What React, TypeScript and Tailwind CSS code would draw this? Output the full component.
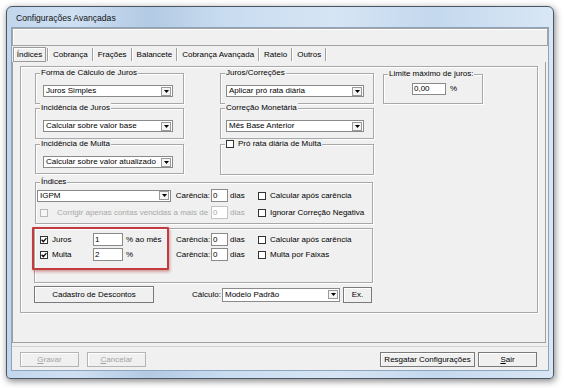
import React from "react";

function Check({ checked = false, disabled = false }: { checked?: boolean; disabled?: boolean }) {
  return (
    <span
      className={`flex-none w-[8px] h-[8px] border flex items-center justify-center ${
        disabled ? "border-[#b8b8b8] bg-[#f6f6f6]" : "border-[#333333] bg-white"
      }`}
    >
      {checked && (
        <svg width="6" height="6" viewBox="0 0 6 6">
          <path d="M0.6 2.8 L2.3 4.6 L5.4 1.1" fill="none" stroke="#111" strokeWidth="1.4" />
        </svg>
      )}
    </span>
  );
}

function Select({ className, text }: { className: string; text: string }) {
  return (
    <div className={`flex-none flex items-center bg-white border border-[#8a8a8a] ${className}`}>
      <span className="flex-1 pl-[2px] whitespace-nowrap overflow-hidden">{text}</span>
      <span className="flex-none mr-[1px] w-[10px] h-[9px] border border-[#9a9a9a] bg-[#f4f4f4] flex items-center justify-center">
        <svg width="5" height="3" viewBox="0 0 5 3">
          <path d="M0 0 H5 L2.5 3 Z" fill="#000" />
        </svg>
      </span>
    </div>
  );
}

function Input({ className, value, disabled = false }: { className: string; value: string; disabled?: boolean }) {
  return (
    <div
      className={`flex-none flex items-center bg-white border pl-[1px] ${
        disabled ? "border-[#c4c4c4] text-[#a8a8a8]" : "border-[#8a8a8a]"
      } ${className}`}
    >
      {value}
    </div>
  );
}

function Btn({ className, children, disabled = false }: { className: string; children: React.ReactNode; disabled?: boolean }) {
  return (
    <div
      className={`flex-none flex items-center justify-center border bg-[#f0f0f0] shadow-[inset_1px_1px_0_#fff] whitespace-nowrap ${
        disabled ? "border-[#b4b4b4] text-[#a4a4a4]" : "border-[#7a7a7a]"
      } ${className}`}
    >
      {children}
    </div>
  );
}

function Group({ className, label, children }: { className: string; label?: React.ReactNode; children?: React.ReactNode }) {
  return (
    <div className={`relative flex-none border border-[#a8a8a8] shadow-[inset_1px_1px_0_#fff,1px_1px_0_#fff] ${className}`}>
      {label && (
        <span className="absolute left-[4px] top-[-6px] bg-[#f0f0f0] px-[1px] leading-[10px] whitespace-nowrap flex items-center">
          {label}
        </span>
      )}
      {children}
    </div>
  );
}

function Sep() {
  return <span className="flex-none self-center w-[2px] h-[13px] border-l border-r border-l-[#a0a0a0] border-r-white" />;
}

function Tab({ label }: { label: string }) {
  return <span className="flex-none px-[4px] self-center whitespace-nowrap">{label}</span>;
}

export default function App() {
  return (
    <div className="w-[564px] h-[388px] bg-white pl-[6px] pt-[6px] overflow-hidden font-['Liberation_Sans',Arial,sans-serif] text-[8px] leading-[10px] text-black">
      {/* window frame */}
      <div className="w-[548px] h-[373px] border border-[#4a5666] rounded-t-[6px] rounded-b-[4px] bg-[linear-gradient(90deg,#c2d6ec_0%,#cfe0f2_12%,#b3cae4_26%,#c9dcf0_40%,#d6e5f4_60%,#c4d8ee_78%,#d9e7f5_100%)] shadow-[1px_2px_7px_rgba(0,0,0,0.5)] flex flex-col px-[5px] pb-[8px]">
        <div className="h-[21px] flex items-center pl-[4px] text-[8.6px] text-[#111]">Configurações Avançadas</div>

        {/* client area */}
        <div className="w-[536px] h-[342px] bg-[#f0f0f0] outline outline-1 outline-[#8ea4bd] flex flex-col">
          {/* top empty panel */}
          <div className="flex-none h-[18px] border border-[#a4a4a4] shadow-[inset_1px_1px_0_#fff]" />

          {/* tabs */}
          <div className="flex-none h-[16px] pt-[1px] pl-[1px] flex">
            <span className="flex-none w-[33px] h-[15px] border border-[#9a9a9a] shadow-[inset_1px_1px_0_#fff] flex items-center justify-center">
              Índices
            </span>
            <span className="w-[1px]" />
            <Sep />
            <Tab label="Cobrança" />
            <Sep />
            <Tab label="Frações" />
            <Sep />
            <Tab label="Balancete" />
            <Sep />
            <Tab label="Cobrança Avançada" />
            <Sep />
            <Tab label="Rateio" />
            <Sep />
            <Tab label="Outros" />
            <Sep />
          </div>

          {/* tab page */}
          <div className="flex-none w-[534px] h-[281px] border-l border-r border-b border-[#a0a0a0] pl-[7px] pt-[4px]">
            <div className="relative w-[518px] h-[247px] border border-[#a8a8a8] shadow-[inset_1px_1px_0_#fff,1px_1px_0_#fff] pt-[6px]">
              {/* columns */}
              <div className="flex h-[102px] pl-[14px]">
                <div className="w-[149px] flex flex-col">
                  <Group className="h-[31px] pt-[11px] pl-[7px]" label="Forma de Cálculo de Juros">
                    <Select className="w-[130px] h-[12px]" text="Juros Simples" />
                  </Group>
                  <Group className="mt-[4px] h-[31px] pt-[11px] pl-[7px]" label="Incidência de Juros">
                    <Select className="w-[130px] h-[12px]" text="Calcular sobre valor base" />
                  </Group>
                  <Group className="mt-[5px] h-[30px] pt-[11px] pl-[7px]" label="Incidência de Multa">
                    <Select className="w-[130px] h-[12px]" text="Calcular sobre valor atualizado" />
                  </Group>
                </div>
                <div className="ml-[36px] w-[154px] flex flex-col">
                  <Group className="h-[31px] pt-[11px] pl-[5px]" label="Juros/Correções">
                    <Select className="w-[138px] h-[12px]" text="Aplicar pró rata diária" />
                  </Group>
                  <Group className="mt-[4px] h-[31px] pt-[11px] pl-[5px]" label="Correção Monetária">
                    <Select className="w-[138px] h-[12px]" text="Mês Base Anterior" />
                  </Group>
                  <Group
                    className="mt-[5px] h-[31px]"
                    label={
                      <>
                        <Check />
                        <span className="ml-[4px]">Pró rata diária de Multa</span>
                      </>
                    }
                  />
                </div>
                <div className="ml-[9px] w-[100px] flex flex-col pt-[1px]">
                  <Group className="h-[30px] pt-[8px] pl-[28px] flex items-start" label="Limite máximo de juros:">
                    <Input className="w-[34px] h-[12px]" value="0,00" />
                    <span className="ml-[4px] mt-[1px]">%</span>
                  </Group>
                </div>
              </div>

              {/* Índices group */}
              <Group className="mt-[7px] ml-[14px] w-[338px] h-[42px] pt-[6px]" label="Índices">
                <div className="flex items-center h-[13px]">
                  <Select className="ml-[1px] w-[134px] h-[12px]" text="IGPM" />
                  <span className="flex-none w-[39px] text-right">Carência:</span>
                  <Input className="ml-[1px] w-[17px] h-[13px]" value="0" />
                  <span className="flex-none w-[30px] pl-[2px]">dias</span>
                  <Check />
                  <span className="ml-[4px] whitespace-nowrap">Calcular após carência</span>
                </div>
                <div className="flex items-center h-[13px] mt-[4px]">
                  <span className="ml-[4px]">
                    <Check disabled />
                  </span>
                  <span className="flex-none ml-[9px] w-[154px] whitespace-nowrap text-[#a8a8a8]">
                    Corrigir apenas contas vencidas a mais de
                  </span>
                  <Input className="w-[17px] h-[13px]" value="0" disabled />
                  <span className="flex-none w-[30px] pl-[2px] text-[#a8a8a8]">dias</span>
                  <Check />
                  <span className="ml-[4px] whitespace-nowrap">Ignorar Correção Negativa</span>
                </div>
              </Group>

              {/* Juros / Multa group */}
              <Group className="mt-[4px] ml-[13px] w-[339px] h-[55px] pt-[4px]">
                <div className="flex items-center h-[13px]">
                  <span className="ml-[5px]">
                    <Check checked />
                  </span>
                  <span className="flex-none ml-[4px] w-[41px]">Juros</span>
                  <Input className="w-[30px] h-[13px]" value="1" />
                  <span className="flex-none w-[53px] pl-[3px] whitespace-nowrap">% ao mês</span>
                  <span className="flex-none w-[34px] text-right">Carência:</span>
                  <Input className="ml-[1px] w-[17px] h-[13px]" value="0" />
                  <span className="flex-none w-[30px] pl-[2px]">dias</span>
                  <Check />
                  <span className="ml-[4px] whitespace-nowrap">Calcular após carência</span>
                </div>
                <div className="flex items-center h-[13px] mt-[2px]">
                  <span className="ml-[5px]">
                    <Check checked />
                  </span>
                  <span className="flex-none ml-[4px] w-[41px]">Multa</span>
                  <Input className="w-[30px] h-[13px]" value="2" />
                  <span className="flex-none w-[53px] pl-[3px]">%</span>
                  <span className="flex-none w-[34px] text-right">Carência:</span>
                  <Input className="ml-[1px] w-[17px] h-[13px]" value="0" />
                  <span className="flex-none w-[30px] pl-[2px]">dias</span>
                  <Check />
                  <span className="ml-[4px] whitespace-nowrap">Multa por Faixas</span>
                </div>
              </Group>

              {/* button row */}
              <div className="mt-[3px] ml-[13px] flex items-center h-[17px]">
                <Btn className="w-[120px] h-[17px]">Cadastro de Descontos</Btn>
                <span className="flex-none ml-[38px] w-[30px]">Cálculo:</span>
                <Select className="w-[118px] h-[14px]" text="Modelo Padrão" />
                <Btn className="ml-[3px] w-[29px] h-[16px]">Ex.</Btn>
              </div>

              {/* red annotation */}
              <div className="absolute left-[11px] top-[160px] w-[137px] h-[43px] border-2 border-[#c23b3e] rounded-[1px] shadow-[1px_2px_3px_rgba(180,60,60,0.45)]" />
            </div>
          </div>

          {/* bottom bar */}
          <div className="flex-1 pt-[3px]">
            <div className="h-[1px] bg-[#d2d2d2]" />
            <div className="mt-[5px] flex items-center pl-[8px]">
              <Btn className="w-[59px] h-[15px]" disabled>
                <span className="underline">G</span>ravar
              </Btn>
              <Btn className="ml-[8px] w-[59px] h-[15px]" disabled>
                <span className="underline">C</span>ancelar
              </Btn>
              <Btn className="ml-[234px] w-[95px] h-[15px]">Resgatar Configurações</Btn>
              <Btn className="ml-[3px] w-[59px] h-[15px]">
                <span className="underline">S</span>air
              </Btn>
            </div>
          </div>
        </div>
      </div>
    </div>
  );
}
